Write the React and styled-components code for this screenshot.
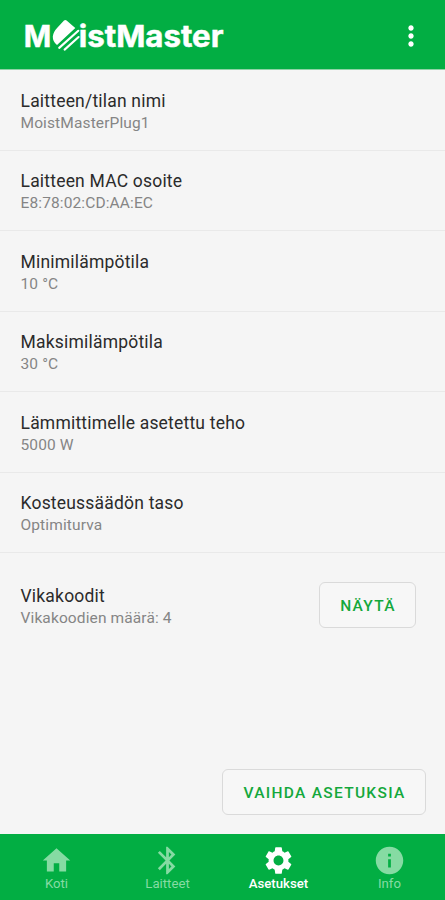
import React from 'react';
import styled, { createGlobalStyle } from 'styled-components';
import { MdHome, MdBluetooth, MdSettings, MdInfo, MdMoreVert } from 'react-icons/md';

const settings = [
  { title: 'Laitteen/tilan nimi', value: 'MoistMasterPlug1' },
  { title: 'Laitteen MAC osoite', value: 'E8:78:02:CD:AA:EC' },
  { title: 'Minimilämpötila', value: '10 °C' },
  { title: 'Maksimilämpötila', value: '30 °C' },
  { title: 'Lämmittimelle asetettu teho', value: '5000 W' },
  { title: 'Kosteussäädön taso', value: 'Optimiturva' },
];

const tabs = [
  { label: 'Koti', Icon: MdHome },
  { label: 'Laitteet', Icon: MdBluetooth },
  { label: 'Asetukset', Icon: MdSettings, active: true },
  { label: 'Info', Icon: MdInfo },
];

const Logo = () => (
  <LogoSvg width="204" height="40" viewBox="0 0 204 40">
    <text x="1.8" y="31.3" textLength="27.5" lengthAdjust="spacingAndGlyphs">M</text>
    <path d="M42 4.6 Q43.3 3.6 44.6 4.6 L53.3 12 L35 29 Q30.6 25.5 30.8 20.5 Q31.2 16 35.5 11.5 Z" />
    <path d="M37.2 31.9 L56.3 14.8 M42.6 33.6 L56.6 21" className="stripe" />
    <text x="56.7" y="31.3" textLength="144.8" lengthAdjust="spacingAndGlyphs">istMaster</text>
  </LogoSvg>
);

const App = () => {
  return (
    <>
      <GlobalStyle />
      <Screen>
        <TopBar>
          <Logo />
          <MenuButton aria-label="Menu">
            <MdMoreVert size={32} />
          </MenuButton>
        </TopBar>
        <Content>
          {settings.map(({ title, value }) => (
            <Row key={title}>
              <Title>{title}</Title>
              <Value>{value}</Value>
            </Row>
          ))}
          <FaultRow>
            <FaultText>
              <Title>Vikakoodit</Title>
              <Value>Vikakoodien määrä: 4</Value>
            </FaultText>
            <OutlinedButton $width={97}>NÄYTÄ</OutlinedButton>
          </FaultRow>
          <Actions>
            <OutlinedButton $width={204}>VAIHDA ASETUKSIA</OutlinedButton>
          </Actions>
        </Content>
        <BottomNav>
          {tabs.map(({ label, Icon, active }) => (
            <Tab key={label} $active={active}>
              <Icon size={33} />
              <span>{label}</span>
            </Tab>
          ))}
        </BottomNav>
      </Screen>
    </>
  );
};

const GlobalStyle = createGlobalStyle`
  * {
    box-sizing: border-box;
  }

  body {
    margin: 0;
    font-family: Roboto, sans-serif;
  }
`;

const Screen = styled.div`
  display: flex;
  flex-direction: column;
  width: 445px;
  height: 900px;
  background: #f5f5f5;
  overflow: hidden;
`;

const TopBar = styled.header`
  display: flex;
  align-items: center;
  justify-content: space-between;
  flex: none;
  height: 70px;
  padding: 3px 18px 0 22px;
  background: #02ae43;
  border-bottom: 1px solid #8fd3a6;
`;

const LogoSvg = styled.svg`
  fill: #fff;

  text {
    font: 700 30px Inter, sans-serif;
    stroke: #fff;
    stroke-width: 0.5;
  }

  .stripe {
    fill: none;
    stroke: #fff;
    stroke-width: 2.1;
    stroke-linecap: round;
  }
`;

const MenuButton = styled.button`
  display: flex;
  padding: 0;
  border: 0;
  background: none;
  color: #fff;
`;

const Content = styled.main`
  display: flex;
  flex-direction: column;
  flex: 1;
`;

const Row = styled.div`
  height: 80.5px;
  padding: 19.5px 20.5px 0;
  border-bottom: 1px solid #e9e9e9;
`;

const Title = styled.div`
  color: #2b2b2b;
  font-size: 17.5px;
  line-height: 22px;
  letter-spacing: 0.2px;
`;

const Value = styled.div`
  color: #858585;
  font-size: 15.5px;
  line-height: 23px;
  letter-spacing: 0.12px;
`;

const FaultRow = styled.div`
  display: flex;
  justify-content: space-between;
  align-items: center;
  height: 104px;
  padding: 0 29px 0 20.5px;
`;

const FaultText = styled.div`
  padding-top: 4px;
`;

const OutlinedButton = styled.button`
  width: ${({ $width }) => $width}px;
  height: 46px;
  padding: 2px 0 0 1px;
  border: 1px solid #dadada;
  border-radius: 6px;
  background: #f7f7f7;
  color: #14a83c;
  font: 500 15.5px Roboto, sans-serif;
  letter-spacing: 1.3px;
  white-space: nowrap;
`;

const Actions = styled.div`
  display: flex;
  justify-content: flex-end;
  margin-top: auto;
  padding: 0 19px 19px;
`;

const BottomNav = styled.nav`
  display: flex;
  flex: none;
  height: 66px;
  padding-left: 1px;
  background: #02ae43;
`;

const Tab = styled.div`
  display: flex;
  flex: 1;
  flex-direction: column;
  align-items: center;
  padding-top: 9.5px;
  color: ${({ $active }) => ($active ? '#fff' : '#86dba3')};
  font-size: 13.2px;
  font-weight: ${({ $active }) => ($active ? 500 : 400)};
  line-height: 14px;
`;

export default App;
